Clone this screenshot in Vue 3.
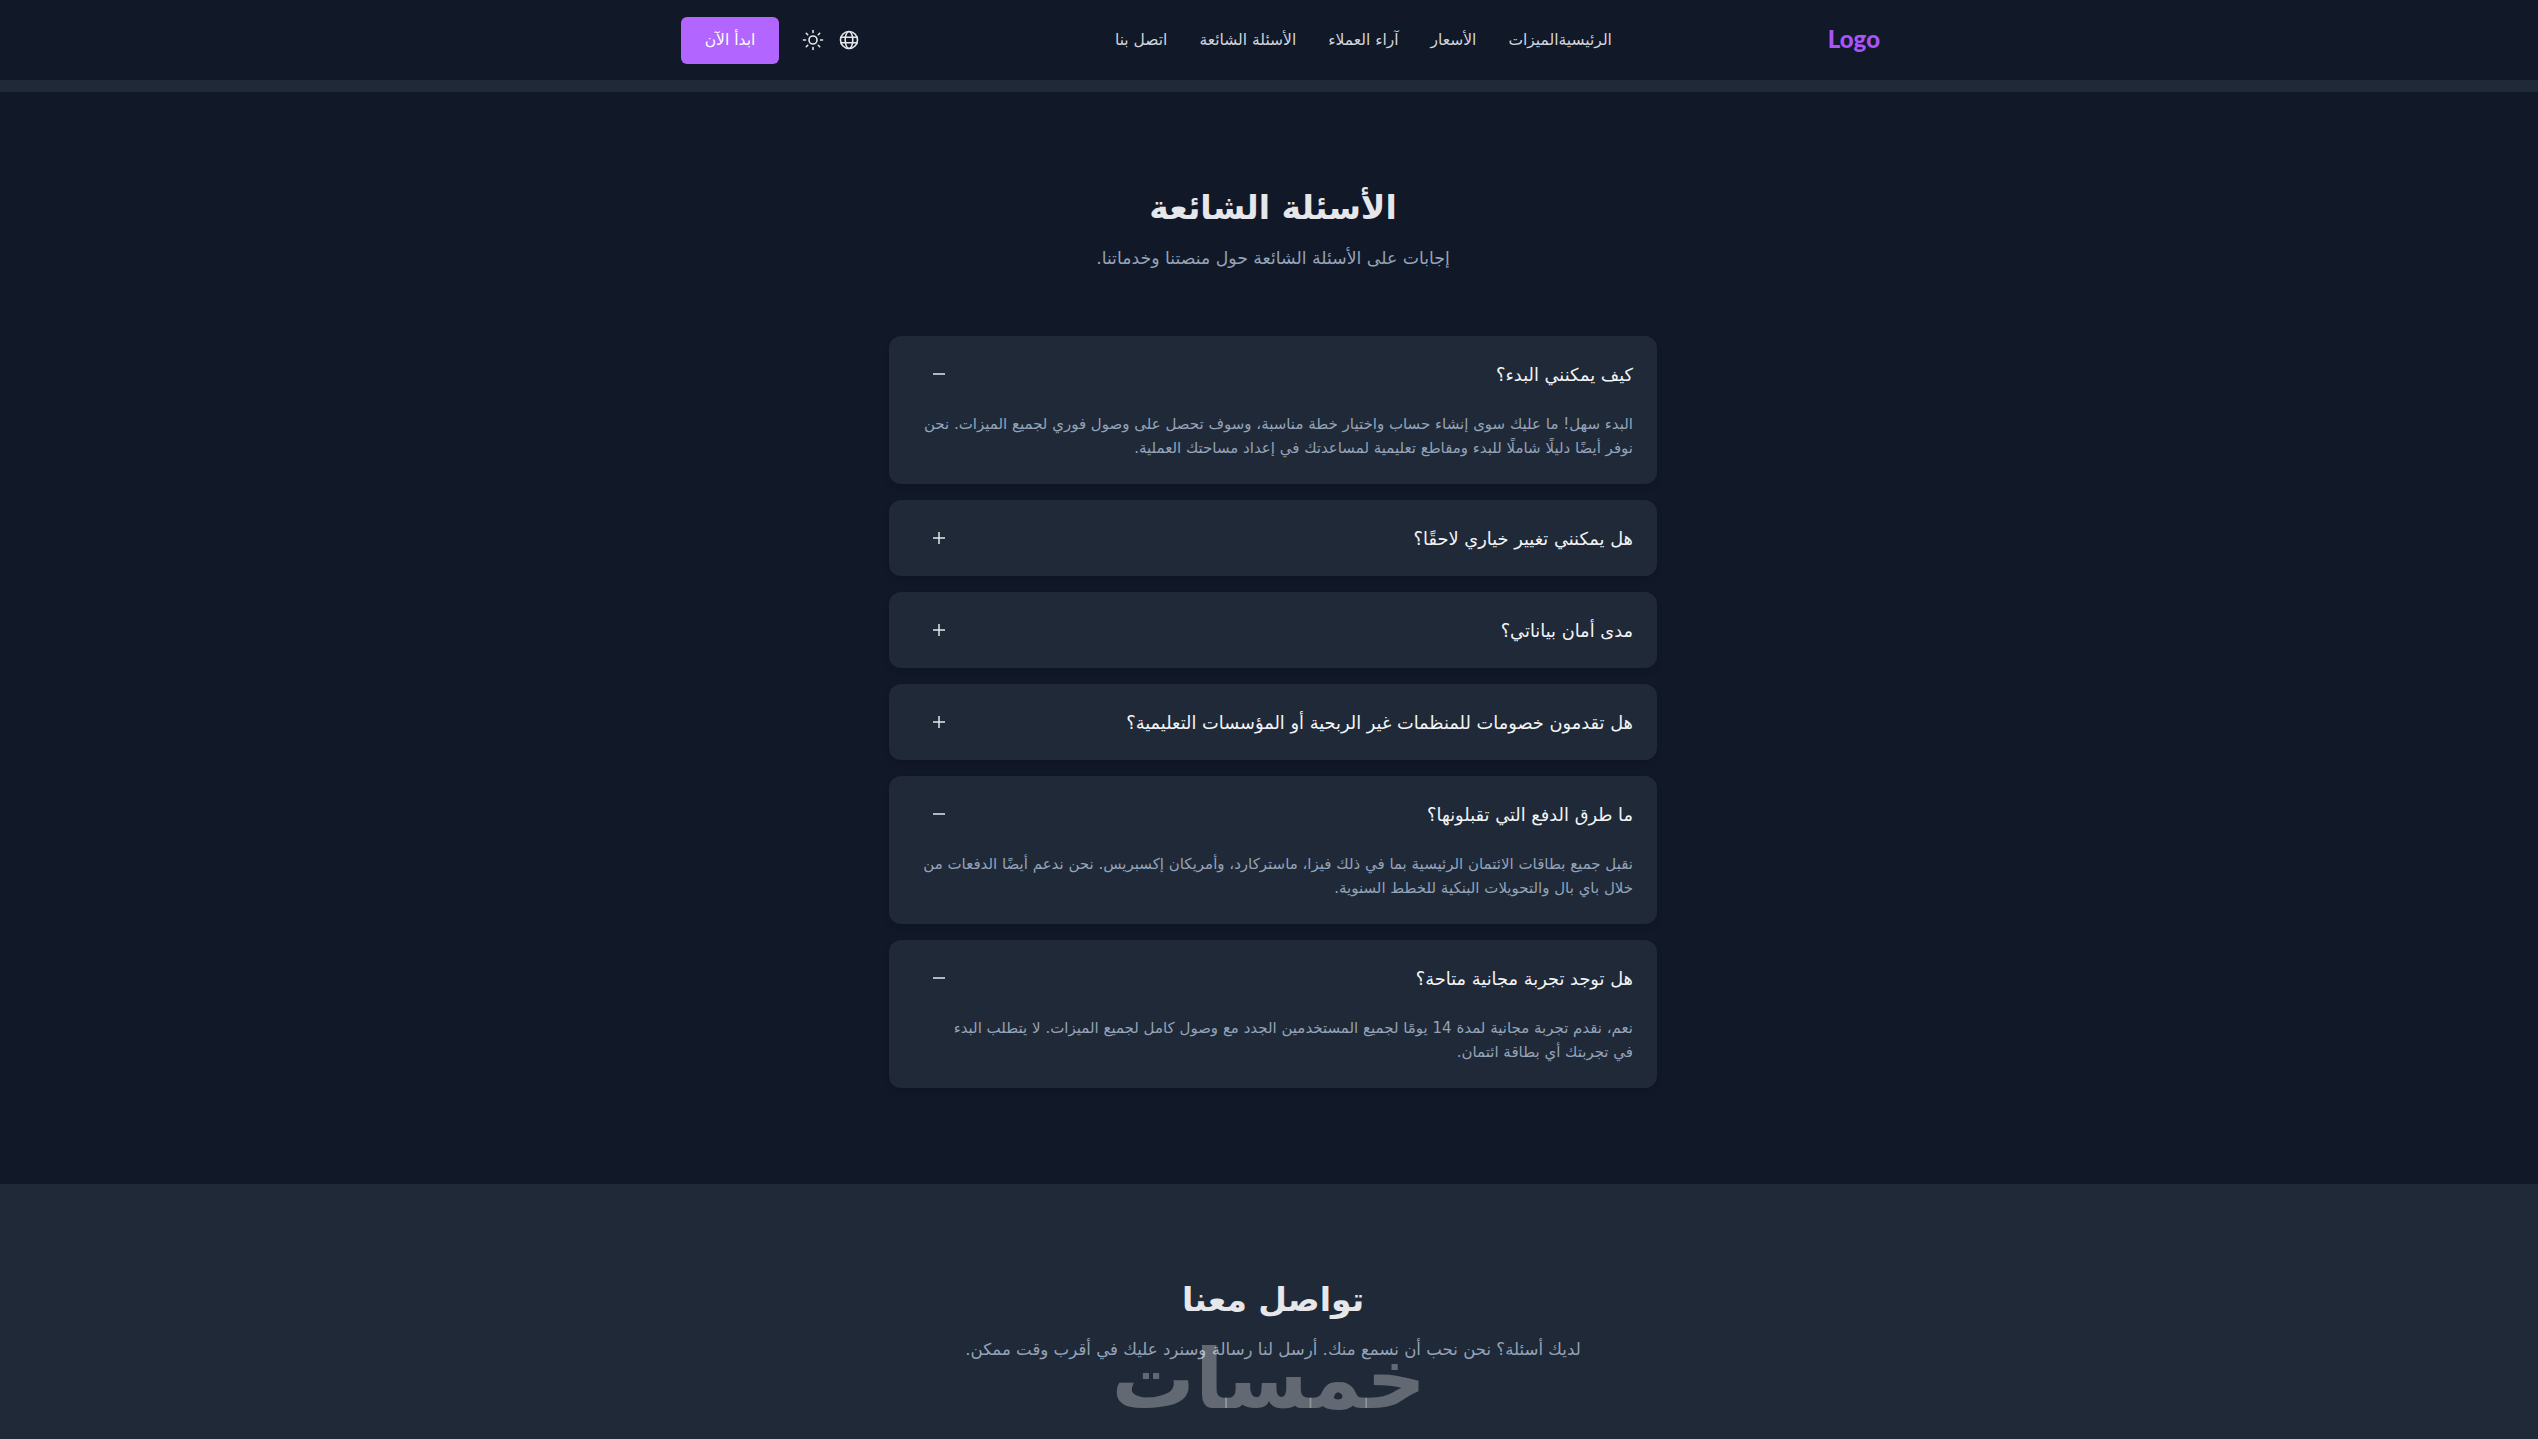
<script setup>
import { ref } from "vue"

const navLinks = ["الرئيسية", "الميزات", "الأسعار", "آراء العملاء", "الأسئلة الشائعة", "اتصل بنا"]

const faqs = ref([
  {
    q: "كيف يمكنني البدء؟",
    a: "البدء سهل! ما عليك سوى إنشاء حساب واختيار خطة مناسبة، وسوف تحصل على وصول فوري لجميع الميزات. نحن نوفر أيضًا دليلًا شاملًا للبدء ومقاطع تعليمية لمساعدتك في إعداد مساحتك العملية.",
    open: true,
  },
  { q: "هل يمكنني تغيير خياري لاحقًا؟", a: "نعم، يمكنك الترقية أو التخفيض في أي وقت.", open: false },
  { q: "مدى أمان بياناتي؟", a: "نستخدم أحدث تقنيات التشفير لحماية بياناتك.", open: false },
  { q: "هل تقدمون خصومات للمنظمات غير الربحية أو المؤسسات التعليمية؟", a: "نعم، تواصل معنا لمعرفة التفاصيل.", open: false },
  {
    q: "ما طرق الدفع التي تقبلونها؟",
    a: "نقبل جميع بطاقات الائتمان الرئيسية بما في ذلك فيزا، ماستركارد، وأمريكان إكسبريس. نحن ندعم أيضًا الدفعات من خلال باي بال والتحويلات البنكية للخطط السنوية.",
    open: true,
  },
  {
    q: "هل توجد تجربة مجانية متاحة؟",
    a: "نعم، نقدم تجربة مجانية لمدة 14 يومًا لجميع المستخدمين الجدد مع وصول كامل لجميع الميزات. لا يتطلب البدء في\u00a0تجربتك أي بطاقة ائتمان.",
    open: true,
  },
])

function toggle(item) {
  item.open = !item.open
}
</script>

<template>
  <div class="page" dir="rtl">
    <header class="topbar">
      <div class="logo" dir="ltr">Logo</div>
      <nav class="nav">
        <div class="nav-first">
          <a>{{ navLinks[0] }}</a>
          <a>{{ navLinks[1] }}</a>
        </div>
        <a v-for="link in navLinks.slice(2)" :key="link">{{ link }}</a>
      </nav>
      <div class="actions">
        <svg class="icon" width="24" height="24" viewBox="0 0 24 24" fill="none" stroke="currentColor" stroke-width="1.6" stroke-linecap="round">
          <circle cx="12" cy="12" r="8.5" />
          <ellipse cx="12" cy="12" rx="3.8" ry="8.5" />
          <path d="M3.8 9.2h16.4M3.8 14.8h16.4" />
        </svg>
        <svg class="icon" width="24" height="24" viewBox="0 0 24 24" fill="none" stroke="currentColor" stroke-width="1.6" stroke-linecap="round">
          <circle cx="12" cy="12" r="4" />
          <path d="M12 2.5v2M12 19.5v2M2.5 12h2M19.5 12h2M5.3 5.3l1.4 1.4M17.3 17.3l1.4 1.4M5.3 18.7l1.4-1.4M17.3 6.7l1.4-1.4" />
        </svg>
        <button class="cta">ابدأ الآن</button>
      </div>
    </header>
    <div class="band"></div>

    <section class="faq">
      <h2>الأسئلة الشائعة</h2>
      <p class="sub">إجابات على الأسئلة الشائعة حول منصتنا وخدماتنا.</p>
      <div class="list">
        <div v-for="item in faqs" :key="item.q" class="card">
          <div class="question" @click="toggle(item)">
            <span>{{ item.q }}</span>
            <svg width="16" height="16" viewBox="0 0 16 16" fill="none" stroke="#e5e7eb" stroke-width="1.5">
              <path d="M2 8h12" />
              <path v-if="!item.open" d="M8 2v12" />
            </svg>
          </div>
          <p v-if="item.open" class="answer">{{ item.a }}</p>
        </div>
      </div>
    </section>

    <section class="contact">
      <h2>تواصل معنا</h2>
      <p class="sub">لديك أسئلة؟ نحن نحب أن نسمع منك. أرسل لنا رسالة وسنرد عليك في أقرب وقت ممكن.</p>
      <div class="watermark">خمسات</div>
    </section>
  </div>
</template>

<style>
html, body {
  margin: 0;
  background: #111827;
  overflow: hidden;
}
</style>

<style scoped>
.page {
  height: 1439px;
  overflow: hidden;
  background: #111827;
  color: #e5e7eb;
  font-family: "DejaVu Sans", sans-serif;
}
.topbar {
  height: 80px;
  box-sizing: border-box;
  padding: 0 658px 0 681px;
  display: flex;
  align-items: center;
  justify-content: space-between;
}
.logo {
  font-size: 24px;
  line-height: 30px;
  margin-bottom: 2px;
  font-weight: 900;
  color: #a855f7;
  font-family: "Lato", sans-serif;
}
.nav {
  display: flex;
  gap: 32px;
  margin-left: 38px;
  font-size: 15.5px;
  color: #d1d5db;
}
.nav-first {
  display: flex;
}
.actions {
  display: flex;
  align-items: center;
  gap: 12px;
  color: #e5e7eb;
}
.cta {
  width: 98px;
  height: 47px;
  margin-right: 10px;
  border: 0;
  border-radius: 6px;
  background: #b366ff;
  color: #fff;
  font: inherit;
  font-size: 15.5px;
}
.band {
  height: 12px;
  background: #1f2937;
}
.faq {
  padding: 96px 0 96px 8px;
  text-align: center;
}
h2 {
  margin: 0;
  font-size: 33px;
  line-height: 40px;
  font-weight: 700;
  color: #e5e7eb;
}
.sub {
  margin: 16px 0 0;
  font-size: 17.3px;
  line-height: 28px;
  color: #94a3b8;
}
.list {
  width: 768px;
  margin: 64px auto 0;
  display: flex;
  flex-direction: column;
  gap: 16px;
  text-align: right;
}
.card {
  background: #1f2937;
  border-radius: 12px;
  box-shadow: 0 4px 6px rgba(0, 0, 0, 0.1);
}
.question {
  height: 76px;
  box-sizing: border-box;
  padding: 0 24px 0 42px;
  display: flex;
  align-items: center;
  justify-content: space-between;
  font-size: 17.8px;
  font-weight: 500;
  color: #f3f4f6;
}
.answer {
  margin: 0;
  padding: 0 24px 24px;
  font-size: 15px;
  line-height: 24px;
  color: #94a3b8;
}
.contact {
  position: relative;
  height: 256px;
  box-sizing: border-box;
  padding: 96px 0 0 8px;
  background: #1f2937;
  text-align: center;
}
.contact .sub {
  font-size: 16.6px;
}
.watermark {
  position: absolute;
  left: 1119px;
  top: 146px;
  width: 307px;
  text-align: center;
  font-size: 83px;
  line-height: 100px;
  font-weight: 700;
  color: rgba(255, 255, 255, 0.3);
}
</style>
